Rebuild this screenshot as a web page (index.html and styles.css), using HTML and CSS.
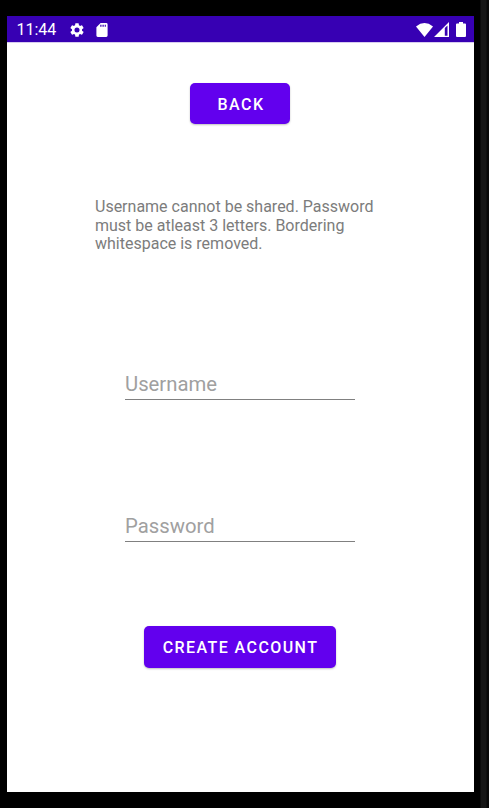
FILE: index.html
```html
<!DOCTYPE html>
<html lang="en">
<head>
<meta charset="utf-8">
<title>Create account</title>
<link rel="stylesheet" href="styles.css">
</head>
<body>
<div class="device">
  <div class="screen">
    <header class="status">
      <span class="clock">11:44</span>
      <svg class="gear" viewBox="2 2 20 20"><path d="M19.14 12.94c.04-.3.06-.61.06-.94s-.02-.64-.07-.94l2.03-1.58a.49.49 0 0 0 .12-.61l-1.92-3.32a.49.49 0 0 0-.59-.22l-2.39.96a7 7 0 0 0-1.62-.94l-.36-2.54a.48.48 0 0 0-.48-.41h-3.84a.47.47 0 0 0-.47.41l-.36 2.54a7.400 7.400 0 0 0-1.620.94l-2.390-.96a.47.47 0 0 0-.59.22L2.740 8.870a.47.47 0 0 0 .12.61l2.030 1.580a7 7 0 0 0 0 1.880l-2.030 1.580a.49.49 0 0 0-.12.61l1.920 3.320c.12.22.37.29.59.22l2.390-.96c.5.380 1.030.7 1.620.94l.36 2.540c.05.24.24.41.48.41h3.840c.24 0 .44-.17.47-.41l.36-2.540a7 7 0 0 0 1.620-.94l2.390.96c.22.08.47 0 .59-.22l1.920-3.320a.47.47 0 0 0-.12-.61zM12 15.600a3.600 3.600 0 1 1 0-7.200 3.600 3.600 0 0 1 0 7.200z"/></svg>
      <svg class="card" viewBox="4 2 16 20"><path fill-rule="evenodd" d="M18 2h-8L4 8v12a2 2 0 0 0 2 2h12a2 2 0 0 0 2-2V4a2 2 0 0 0-2-2zM9.500 4.500v3h1.800v-3zM12.700 4.500v3h1.800v-3zM15.900 4.500v3h1.600v-3z"/></svg>
      <svg class="wifi" viewBox="0 0 17 14"><path d="M0 3.500Q8.500-3.300 17 3.500L8.500 14z"/></svg>
      <svg class="signal" viewBox="0 0 15 15"><path fill-rule="evenodd" d="M0 15L15 0v15zM10.800 6v7.700h2.700V3.400z"/></svg>
      <svg class="battery" viewBox="0 0 10 15"><path d="M3 0h4v1.500h2q1 0 1 1V14q0 1-1 1H1q-1 0-1-1V2.500q0-1 1-1h2z"/></svg>
    </header>
    <main class="content">
      <button class="button back">BACK</button>
      <p class="hint">Username cannot be shared. Password must be atleast 3 letters. Bordering whitespace is removed.</p>
      <input class="field" type="text" placeholder="Username" aria-label="Username">
      <input class="field password" type="password" placeholder="Password" aria-label="Password">
      <button class="button create">CREATE ACCOUNT</button>
    </main>
  </div>
</div>
</body>
</html>
```
FILE: styles.css
```css
* { box-sizing: border-box; }
body { margin: 0; background: #000; font-family: Roboto, sans-serif; }
.device {
  height: 808px;
  padding: 16px 15px 16px 7px;
  background: linear-gradient(to right, #000 480px, #161616 481px, #161616 486px, #080808 487px);
}
.screen { height: 100%; display: flex; flex-direction: column; background: #fff; }
.status { height: 26px; flex: none; display: flex; align-items: center; padding: 1px 8px 0 9.500px; background: #3700b3; color: #fff; box-shadow: 0 1px #d7ccef; }
.status svg { fill: #fff; flex: none; }
.clock { width: 53.500px; font-size: 16px; line-height: 26px; }
.gear { width: 14px; height: 14px; }
.card { width: 12px; height: 14px; margin-left: 12px; }
.wifi { width: 17px; height: 14px; margin-left: auto; }
.signal { width: 15px; height: 15px; margin-left: 1px; }
.battery { width: 10px; height: 15px; margin-left: 7px; }
.content { display: flex; flex-direction: column; align-items: center; padding-top: 41px; }
.button {
  height: 41px; padding: 2px 0 0 1px; border: 0; border-radius: 5px;
  background: #6200ee; color: #fff; font: 500 16px Roboto, sans-serif; letter-spacing: 1.430px;
  box-shadow: 0 1px 2px rgba(0, 0, 0, .25);
}
.back { width: 100px; padding-left: 2px; margin-right: 1px; }
.hint { width: 290px; margin: 74px 1px 0 0; font-size: 16px; line-height: 18.600px; color: #7c7c7c; }
.field {
  width: 230px; height: 36px; margin: 110.200px 1px 0 0; padding: 5px 0 0;
  border: 0; border-bottom: 1px solid #808080; border-radius: 0; outline: 0;
  background: none; color: #222; font: 20.300px Roboto, sans-serif;
}
.field::placeholder { color: #a0a0a0; opacity: 1; }
.password { margin-top: 106px; }
.create { width: 192px; height: 42px; margin-top: 84px; margin-right: 1px; }
```
